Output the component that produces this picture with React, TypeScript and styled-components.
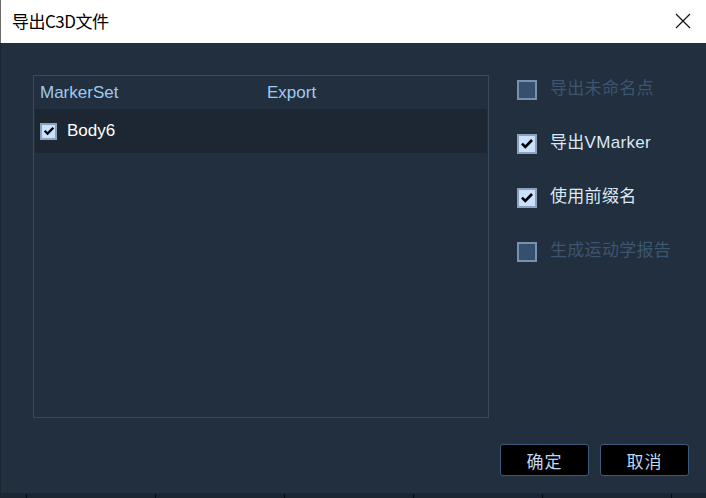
import React from 'react';
import styled, {createGlobalStyle} from 'styled-components';

const GlobalStyle = createGlobalStyle`
	html, body {
		margin: 0;
		padding: 0;
		background: #222f3e;
	}
	* {
		box-sizing: border-box;
	}
`;

const font = `"Liberation Sans", "Noto Sans CJK SC", Arial, sans-serif`;

const Window = styled.div`
	width: 706px;
	height: 498px;
	display: flex;
	flex-direction: column;
	font-family: ${font};
	overflow: hidden;
`;

const TitleBar = styled.div`
	height: 43px;
	flex: none;
	display: flex;
	align-items: center;
	justify-content: space-between;
	padding: 0 14px 2px 11px;
	background: #fff;
	border-left: 1px solid #6a6a6a;
`;

const Title = styled.span`
	font-family: "Noto Sans CJK SC", "Liberation Sans", sans-serif;
	font-size: 17px;
	color: #000;
	letter-spacing: -0.5px;
`;

const CloseButton = styled.div`
	width: 18px;
	height: 18px;
	display: flex;
	align-items: center;
	justify-content: center;
`;

const Body = styled.div`
	flex: 1;
	display: flex;
	flex-direction: column;
	padding: 32px 17px 0 32px;
	background: #222f3e;
	border-left: 1px solid #1b2530;
`;

const Content = styled.div`
	display: flex;
	gap: 28px;
`;

const Table = styled.div`
	width: 456px;
	height: 343px;
	border: 1px solid #3a4a5c;
	display: flex;
	flex-direction: column;
	padding: 0 1px;
`;

const HeaderRow = styled.div`
	height: 33px;
	display: grid;
	grid-template-columns: 227px 1fr;
	align-items: center;
	padding-left: 5px;
	color: #9fcaf0;
	font-size: 17px;
`;

const DataRow = styled.div`
	height: 44px;
	display: flex;
	align-items: center;
	gap: 10px;
	padding-left: 5px;
	background: #1c2733;
	color: #fff;
	font-size: 17px;
`;

const Box = styled.div<{$size: number; $checked: boolean}>`
	width: ${p => p.$size}px;
	height: ${p => p.$size}px;
	flex: none;
	display: flex;
	align-items: center;
	justify-content: center;
	background: ${p => (p.$checked ? '#c9e1fc' : '#35506e')};
	border: 2px solid ${p => (p.$checked ? '#8ea3ba' : '#7891b0')};
`;

const Options = styled.div`
	display: flex;
	flex-direction: column;
	gap: 34px;
	padding-top: 5px;
`;

const Option = styled.div<{$disabled: boolean}>`
	display: flex;
	align-items: center;
	gap: 13px;
	height: 20px;
	font-family: "Noto Sans CJK SC", "Liberation Sans", sans-serif;
	font-size: 17px;
	line-height: 20px;
	color: ${p => (p.$disabled ? '#3c5570' : '#dbe8f6')};
`;

const OptionLabel = styled.span`
	font-family: ${font};
	letter-spacing: 0.3px;
	margin-top: -2px;
`;

const Footer = styled.div`
	display: flex;
	justify-content: flex-end;
	gap: 11px;
	margin-top: 26px;
`;

const Button = styled.div`
	width: 89px;
	height: 32px;
	display: flex;
	align-items: center;
	justify-content: center;
	background: #000;
	border: 1px solid #3a5a7e;
	border-radius: 3px;
	color: #bcd8f5;
	font-family: "Noto Sans CJK SC", sans-serif;
	font-size: 17px;
	letter-spacing: 1px;
`;

const BottomStrip = styled.div`
	height: 5px;
	flex: none;
	display: flex;
	background: #1c2632;
	padding-left: 26px;
	gap: 128px;
`;

const Tick = styled.div`
	width: 1px;
	height: 4px;
	margin-top: 1px;
	background: #05080c;
`;

const Check = ({w}: {w: number}) => (
	<svg width={w} height={w * 0.8} viewBox="0 0 12 10">
		<path d="M1.5 5 L4.5 8 L10.5 1.8" fill="none" stroke="#000" strokeWidth="2.4" />
	</svg>
);

const CheckBox = ({size, checked}: {size: number; checked: boolean}) => (
	<Box $size={size} $checked={checked}>
		{checked && <Check w={size >= 20 ? 14 : 12} />}
	</Box>
);

const options = [
	{label: '导出未命名点', checked: false, disabled: true},
	{label: '导出VMarker', checked: true, disabled: false},
	{label: '使用前缀名', checked: true, disabled: false},
	{label: '生成运动学报告', checked: false, disabled: true},
];

const App = () => (
	<Window>
		<GlobalStyle />
		<TitleBar>
			<Title>导出C3D文件</Title>
			<CloseButton>
				<svg width="16" height="16" viewBox="0 0 16 16">
					<path d="M1 1 L15 15 M15 1 L1 15" stroke="#111" strokeWidth="1.2" />
				</svg>
			</CloseButton>
		</TitleBar>
		<Body>
			<Content>
				<Table>
					<HeaderRow>
						<span>MarkerSet</span>
						<span>Export</span>
					</HeaderRow>
					<DataRow>
						<CheckBox size={17} checked />
						<span>Body6</span>
					</DataRow>
				</Table>
				<Options>
					{options.map(o => (
						<Option key={o.label} $disabled={o.disabled}>
							<CheckBox size={20} checked={o.checked} />
							<OptionLabel>{o.label}</OptionLabel>
						</Option>
					))}
				</Options>
			</Content>
			<Footer>
				<Button>确定</Button>
				<Button>取消</Button>
			</Footer>
		</Body>
		<BottomStrip>
			{[0, 1, 2, 3, 4, 5].map(i => (
				<Tick key={i} />
			))}
		</BottomStrip>
	</Window>
);

export default App;
